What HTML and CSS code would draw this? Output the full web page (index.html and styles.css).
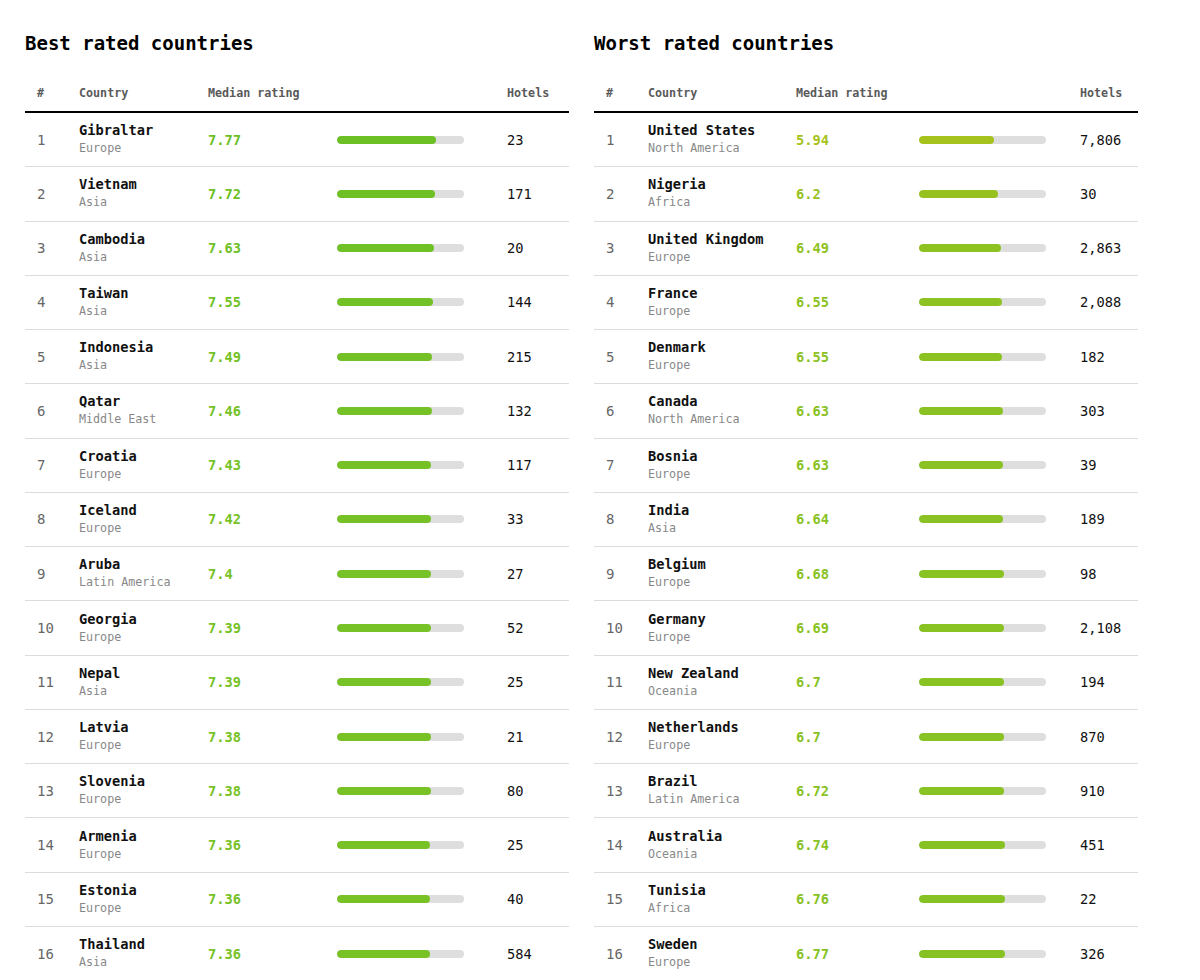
FILE: index.html
```html
<!DOCTYPE html>
<html lang="en">
<head>
<meta charset="utf-8">
<title>Country ratings</title>
<link rel="stylesheet" href="styles.css">
</head>
<body>
<main class="page">
  <section class="board best">
    <h2 class="title">Best rated countries</h2>
    <div class="head">
      <span class="c-num">#</span><span>Country</span><span>Median rating</span><span></span><span>Hotels</span>
    </div>
    <div class="row"><span class="c-num">1</span><div class="country"><b>Gibraltar</b><small>Europe</small></div><span class="rating" style="--c:#6cc024">7.77</span><div class="bar" style="--w:77.7%;--c:#6cc024"><i></i></div><span class="hotels">23</span></div>
    <div class="row"><span class="c-num">2</span><div class="country"><b>Vietnam</b><small>Asia</small></div><span class="rating" style="--c:#6ec024">7.72</span><div class="bar" style="--w:77.2%;--c:#6ec024"><i></i></div><span class="hotels">171</span></div>
    <div class="row"><span class="c-num">3</span><div class="country"><b>Cambodia</b><small>Asia</small></div><span class="rating" style="--c:#70c125">7.63</span><div class="bar" style="--w:76.3%;--c:#70c125"><i></i></div><span class="hotels">20</span></div>
    <div class="row"><span class="c-num">4</span><div class="country"><b>Taiwan</b><small>Asia</small></div><span class="rating" style="--c:#72c126">7.55</span><div class="bar" style="--w:75.5%;--c:#72c126"><i></i></div><span class="hotels">144</span></div>
    <div class="row"><span class="c-num">5</span><div class="country"><b>Indonesia</b><small>Asia</small></div><span class="rating" style="--c:#74c126">7.49</span><div class="bar" style="--w:74.9%;--c:#74c126"><i></i></div><span class="hotels">215</span></div>
    <div class="row"><span class="c-num">6</span><div class="country"><b>Qatar</b><small>Middle East</small></div><span class="rating" style="--c:#75c226">7.46</span><div class="bar" style="--w:74.6%;--c:#75c226"><i></i></div><span class="hotels">132</span></div>
    <div class="row"><span class="c-num">7</span><div class="country"><b>Croatia</b><small>Europe</small></div><span class="rating" style="--c:#76c226">7.43</span><div class="bar" style="--w:74.3%;--c:#76c226"><i></i></div><span class="hotels">117</span></div>
    <div class="row"><span class="c-num">8</span><div class="country"><b>Iceland</b><small>Europe</small></div><span class="rating" style="--c:#76c226">7.42</span><div class="bar" style="--w:74.2%;--c:#76c226"><i></i></div><span class="hotels">33</span></div>
    <div class="row"><span class="c-num">9</span><div class="country"><b>Aruba</b><small>Latin America</small></div><span class="rating" style="--c:#77c226">7.4</span><div class="bar" style="--w:74%;--c:#77c226"><i></i></div><span class="hotels">27</span></div>
    <div class="row"><span class="c-num">10</span><div class="country"><b>Georgia</b><small>Europe</small></div><span class="rating" style="--c:#77c226">7.39</span><div class="bar" style="--w:73.9%;--c:#77c226"><i></i></div><span class="hotels">52</span></div>
    <div class="row"><span class="c-num">11</span><div class="country"><b>Nepal</b><small>Asia</small></div><span class="rating" style="--c:#77c226">7.39</span><div class="bar" style="--w:73.9%;--c:#77c226"><i></i></div><span class="hotels">25</span></div>
    <div class="row"><span class="c-num">12</span><div class="country"><b>Latvia</b><small>Europe</small></div><span class="rating" style="--c:#78c226">7.38</span><div class="bar" style="--w:73.8%;--c:#78c226"><i></i></div><span class="hotels">21</span></div>
    <div class="row"><span class="c-num">13</span><div class="country"><b>Slovenia</b><small>Europe</small></div><span class="rating" style="--c:#78c226">7.38</span><div class="bar" style="--w:73.8%;--c:#78c226"><i></i></div><span class="hotels">80</span></div>
    <div class="row"><span class="c-num">14</span><div class="country"><b>Armenia</b><small>Europe</small></div><span class="rating" style="--c:#78c226">7.36</span><div class="bar" style="--w:73.6%;--c:#78c226"><i></i></div><span class="hotels">25</span></div>
    <div class="row"><span class="c-num">15</span><div class="country"><b>Estonia</b><small>Europe</small></div><span class="rating" style="--c:#78c226">7.36</span><div class="bar" style="--w:73.6%;--c:#78c226"><i></i></div><span class="hotels">40</span></div>
    <div class="row"><span class="c-num">16</span><div class="country"><b>Thailand</b><small>Asia</small></div><span class="rating" style="--c:#78c226">7.36</span><div class="bar" style="--w:73.6%;--c:#78c226"><i></i></div><span class="hotels">584</span></div>
  </section>

  <section class="board worst">
    <h2 class="title">Worst rated countries</h2>
    <div class="head">
      <span class="c-num">#</span><span>Country</span><span>Median rating</span><span></span><span>Hotels</span>
    </div>
    <div class="row"><span class="c-num">1</span><div class="country"><b>United States</b><small>North America</small></div><span class="rating" style="--c:#a6c21c">5.94</span><div class="bar" style="--w:59.4%;--c:#a6c21c"><i></i></div><span class="hotels">7,806</span></div>
    <div class="row"><span class="c-num">2</span><div class="country"><b>Nigeria</b><small>Africa</small></div><span class="rating" style="--c:#97c11e">6.2</span><div class="bar" style="--w:62%;--c:#97c11e"><i></i></div><span class="hotels">30</span></div>
    <div class="row"><span class="c-num">3</span><div class="country"><b>United Kingdom</b><small>Europe</small></div><span class="rating" style="--c:#8ec221">6.49</span><div class="bar" style="--w:64.9%;--c:#8ec221"><i></i></div><span class="hotels">2,863</span></div>
    <div class="row"><span class="c-num">4</span><div class="country"><b>France</b><small>Europe</small></div><span class="rating" style="--c:#8cc222">6.55</span><div class="bar" style="--w:65.5%;--c:#8cc222"><i></i></div><span class="hotels">2,088</span></div>
    <div class="row"><span class="c-num">5</span><div class="country"><b>Denmark</b><small>Europe</small></div><span class="rating" style="--c:#8cc222">6.55</span><div class="bar" style="--w:65.5%;--c:#8cc222"><i></i></div><span class="hotels">182</span></div>
    <div class="row"><span class="c-num">6</span><div class="country"><b>Canada</b><small>North America</small></div><span class="rating" style="--c:#8ac223">6.63</span><div class="bar" style="--w:66.3%;--c:#8ac223"><i></i></div><span class="hotels">303</span></div>
    <div class="row"><span class="c-num">7</span><div class="country"><b>Bosnia</b><small>Europe</small></div><span class="rating" style="--c:#8ac223">6.63</span><div class="bar" style="--w:66.3%;--c:#8ac223"><i></i></div><span class="hotels">39</span></div>
    <div class="row"><span class="c-num">8</span><div class="country"><b>India</b><small>Asia</small></div><span class="rating" style="--c:#8ac223">6.64</span><div class="bar" style="--w:66.4%;--c:#8ac223"><i></i></div><span class="hotels">189</span></div>
    <div class="row"><span class="c-num">9</span><div class="country"><b>Belgium</b><small>Europe</small></div><span class="rating" style="--c:#89c223">6.68</span><div class="bar" style="--w:66.8%;--c:#89c223"><i></i></div><span class="hotels">98</span></div>
    <div class="row"><span class="c-num">10</span><div class="country"><b>Germany</b><small>Europe</small></div><span class="rating" style="--c:#89c223">6.69</span><div class="bar" style="--w:66.9%;--c:#89c223"><i></i></div><span class="hotels">2,108</span></div>
    <div class="row"><span class="c-num">11</span><div class="country"><b>New Zealand</b><small>Oceania</small></div><span class="rating" style="--c:#88c223">6.7</span><div class="bar" style="--w:67%;--c:#88c223"><i></i></div><span class="hotels">194</span></div>
    <div class="row"><span class="c-num">12</span><div class="country"><b>Netherlands</b><small>Europe</small></div><span class="rating" style="--c:#88c223">6.7</span><div class="bar" style="--w:67%;--c:#88c223"><i></i></div><span class="hotels">870</span></div>
    <div class="row"><span class="c-num">13</span><div class="country"><b>Brazil</b><small>Latin America</small></div><span class="rating" style="--c:#88c223">6.72</span><div class="bar" style="--w:67.2%;--c:#88c223"><i></i></div><span class="hotels">910</span></div>
    <div class="row"><span class="c-num">14</span><div class="country"><b>Australia</b><small>Oceania</small></div><span class="rating" style="--c:#87c224">6.74</span><div class="bar" style="--w:67.4%;--c:#87c224"><i></i></div><span class="hotels">451</span></div>
    <div class="row"><span class="c-num">15</span><div class="country"><b>Tunisia</b><small>Africa</small></div><span class="rating" style="--c:#87c224">6.76</span><div class="bar" style="--w:67.6%;--c:#87c224"><i></i></div><span class="hotels">22</span></div>
    <div class="row"><span class="c-num">16</span><div class="country"><b>Sweden</b><small>Europe</small></div><span class="rating" style="--c:#86c224">6.77</span><div class="bar" style="--w:67.7%;--c:#86c224"><i></i></div><span class="hotels">326</span></div>
  </section>
</main>
</body>
</html>
```

FILE: styles.css
```css
html, body {
  margin: 0;
  padding: 0;
  background: #ffffff;
}

body {
  font-family: "DejaVu Sans Mono", "Liberation Mono", monospace;
  color: #111111;
}

.page {
  display: flex;
  gap: 25px;
  padding: 31px 25px 0 25px;
}

.board {
  width: 544px;
  flex: none;
}

.title {
  margin: 0 0 18px 0;
  font-size: 19px;
  line-height: 24px;
  font-weight: bold;
  color: #000;
}

.head,
.row {
  display: grid;
  align-items: center;
}

.best .head,
.best .row {
  grid-template-columns: 54px 129px 129px 170px 62px;
}

.worst .head,
.worst .row {
  grid-template-columns: 54px 148px 123px 161px 58px;
}

.head {
  height: 40px;
  box-sizing: border-box;
  border-bottom: 2px solid #000;
  font-size: 11.7px;
  color: #5a5a5a;
  font-weight: 600;
  padding-top: 2px;
}

.c-num {
  padding-left: 12px;
}

.row {
  height: 54.27px;
  box-sizing: border-box;
  border-bottom: 1px solid #dcdcdc;
  font-size: 14px;
}

.row .c-num {
  color: #666;
}

.country {
  display: flex;
  flex-direction: column;
  padding-bottom: 1px;
}

.country b {
  font-size: 13.7px;
  line-height: 18px;
  font-weight: bold;
  color: #111;
}

.country small {
  font-size: 11.7px;
  line-height: 18px;
  color: #888;
}

.rating {
  font-weight: bold;
  font-size: 13.7px;
  color: var(--c);
}

.bar {
  width: 127px;
  height: 8px;
  border-radius: 4px;
  background: #dedede;
  overflow: hidden;
}

.bar i {
  display: block;
  width: var(--w);
  height: 100%;
  border-radius: 4px;
  background: var(--c);
}

.hotels {
  color: #111;
  font-size: 13.7px;
}
```
